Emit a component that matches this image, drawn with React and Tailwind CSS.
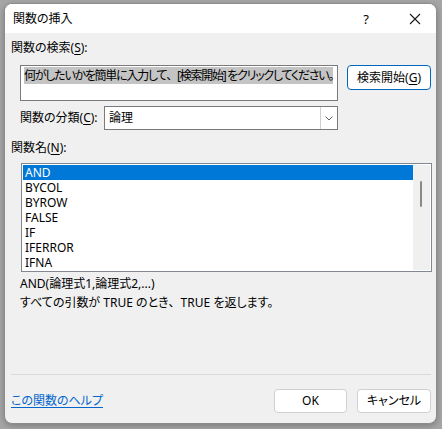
const fns = ['AND', 'BYCOL', 'BYROW', 'FALSE', 'IF', 'IFERROR', 'IFNA']

function Key({ k }) {
  return <span className="underline underline-offset-2">{k}</span>
}

export default function App() {
  return (
    <div
      className="w-[442px] h-[429px] bg-[#a6a6a6] pt-[3px] pl-[4px] text-[12px] leading-[16px] text-black [font-feature-settings:'palt']"
      style={{ fontFamily: '"Noto Sans", "Noto Sans CJK JP", sans-serif' }}
    >
      <div className="w-[433px] h-[421px] rounded-[8px] border border-[#8c8c8c] bg-[#f0f0f0] overflow-hidden flex flex-col shadow-[0_2px_6px_rgba(0,0,0,0.25)]">
        {/* title bar */}
        <div className="h-[29px] bg-white flex items-center pl-[8px] shrink-0">
          <span className="flex-1">関数の挿入</span>
          <span className="w-[12px] text-center mr-[37px] text-[13px]">?</span>
          <svg width="12" height="12" viewBox="0 0 12 12" className="mr-[15px]">
            <path d="M1 1 L11 11 M11 1 L1 11" stroke="#1a1a1a" strokeWidth="1.1" />
          </svg>
        </div>

        <div className="flex-1 flex flex-col pl-[6px] pr-[4px]">
          <div className="mt-[7px]">
            関数の検索(<Key k="S" />):
          </div>

          <div className="flex mt-[9px] ml-[9px]">
            <div className="w-[318px] h-[36px] bg-white border border-[#7a7a7a] px-[3px] pt-[2px] overflow-hidden">
              <span className="bg-[#c4c4c4] whitespace-nowrap tracking-[-1.25px]">
                何がしたいかを簡単に入力して<span className="[font-feature-settings:normal]">、</span>[検索開始] をクリックしてください。
              </span>
            </div>
            <button className="ml-[9px] w-[84px] h-[25px] bg-white border border-[#0067c0] rounded-[4px] flex items-center justify-center">
              検索開始(<Key k="G" />)
            </button>
          </div>

          <div className="flex items-center mt-[5px] ml-[9px]">
            <span className="w-[84px]">
              関数の分類(<Key k="C" />):
            </span>
            <div className="w-[234px] h-[24px] bg-white border border-[#7a7a7a] flex">
              <span className="flex-1 pl-[4px] leading-[22px]">論理</span>
              <div className="w-[17px] border-l border-[#cfcfcf] flex items-center justify-center">
                <svg width="8" height="5" viewBox="0 0 8 5">
                  <path d="M0.5 0.5 L4 4 L7.5 0.5" stroke="#606060" fill="none" strokeWidth="1" />
                </svg>
              </div>
            </div>
          </div>

          <div className="mt-[10px]">
            関数名(<Key k="N" />):
          </div>

          <div className="mt-[7px] ml-[10px] w-[411px] h-[109px] bg-white border border-[#828790] flex p-[1px]">
            <div className="flex-1 flex flex-col">
              {fns.map((f, i) => (
                <div
                  key={f}
                  className={
                    'h-[15px] leading-[15px] pl-[2px] ' +
                    (i === 0 ? 'bg-[#0078d7] text-white' : '')
                  }
                >
                  {f}
                </div>
              ))}
            </div>
            <div className="w-[17px] bg-[#f0f0f0] flex justify-center pt-[16px]">
              <div className="w-[2px] h-[26px] bg-[#8a8a8a] rounded-full ml-[-1px]" />
            </div>
          </div>

          <div className="mt-[4px] ml-[9px]">AND(論理式1,論理式2,...)</div>
          <div className="mt-[3px] ml-[9px]">
            すべての引数が TRUE のとき
            <span className="[font-feature-settings:normal]">、</span>
            TRUE を返します。
          </div>

          <div className="mt-auto h-px bg-[#d9d9d9] mr-[1px]" />

          <div className="flex items-center mt-[14px] mb-[10px]">
            <a className="flex-1 text-[#0066cc] underline underline-offset-2">この関数のヘルプ</a>
            <button className="w-[73px] h-[24px] bg-white border border-[#d0d0d0] rounded-[4px]">OK</button>
            <button className="ml-[10px] mr-[1px] w-[74px] h-[24px] bg-white border border-[#d0d0d0] rounded-[4px]">
              キャンセル
            </button>
          </div>
        </div>
      </div>
    </div>
  )
}
